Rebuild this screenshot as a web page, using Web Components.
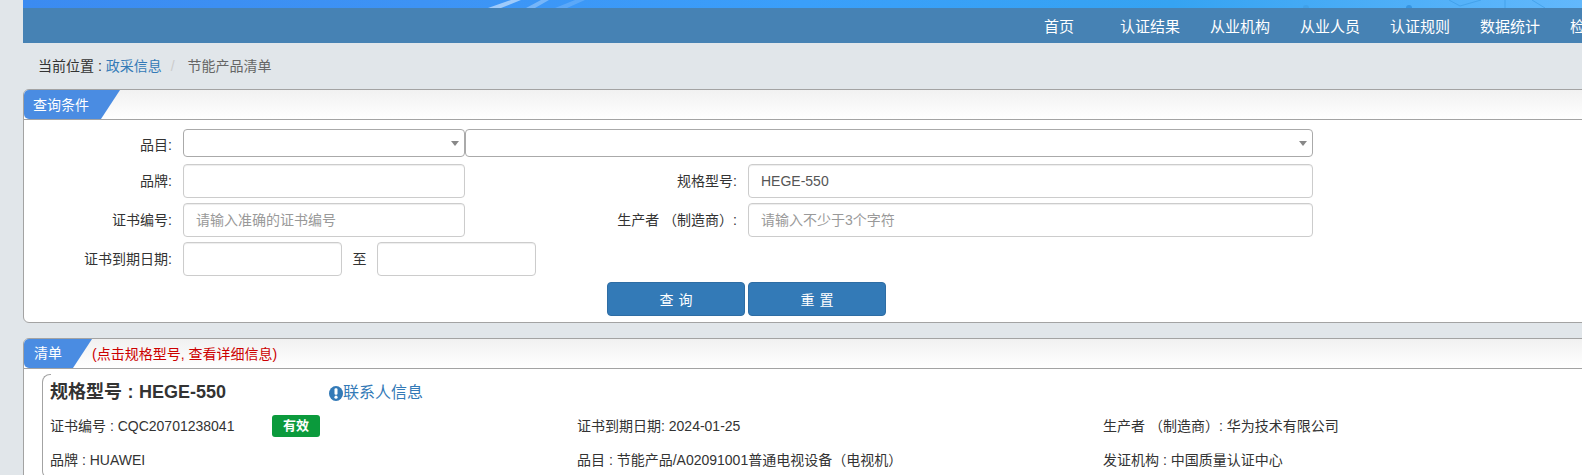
<!DOCTYPE html>
<html lang="zh-CN">
<head>
<meta charset="utf-8">
<title>节能产品清单</title>
<style>
    html, body { margin: 0; height: 475px; overflow: hidden; background: #e1e6ea; }
    body { font: 14px/20px "Liberation Sans", "Noto Sans CJK SC", sans-serif; color: #333; }
    .page { width: 1700px; margin-left: 23px; }
</style>
</head>
<body>
<div class="page">
    <site-header></site-header>
    <bread-crumb></bread-crumb>
    <query-panel></query-panel>
    <result-panel></result-panel>
</div>

<script>
class SiteHeader extends HTMLElement {
    constructor() {
        super();
        const shadowRoot = this.attachShadow({ mode: 'open' });
        const items = ['认证结果', '从业机构', '从业人员', '认证规则', '数据统计', '检'];
        shadowRoot.innerHTML = `
            <style>
                :host{ display:block; }
                .band{
                    height:8px;
                    background:linear-gradient(90deg, #3b8bf1 0, #3d93f5 400px, #3a9ffa 780px, #35a3f2 1150px, #62b8fc 1559px);
                }
                .band svg{ display:block; }
                nav{
                    height:35px;
                    background:#4682b4;
                    display:flex;
                    padding-left:1006px;
                    line-height:37px;
                    font-size:15px;
                    color:#fff;
                }
                a{ padding:0 15px; white-space:nowrap; }
                a.home{ margin-right:16px; }
            </style>
            <div class="band">
                <svg width="1700" height="8" viewBox="0 0 1700 8">
                    <polygon points="465,8 478,8 498,0 488,0" fill="#fff" opacity=".5"/>
                    <polygon points="503,8 512,8 526,0 518,0" fill="#fff" opacity=".3"/>
                    <polygon points="532,8 544,8 562,0 552,0" fill="#fff" opacity=".16"/>
                    <g fill="none" stroke="#3d9ce6" stroke-width="1" opacity=".7">
                        <path d="M1426 0L1437 6L1458 0"/>
                        <path d="M1482 0V8"/>
                        <path d="M1509 0L1522 8"/>
                    </g>
                    <circle cx="1283" cy="8" r="3" fill="#3d9ce6" opacity=".7"/>
                    <circle cx="1386" cy="8" r="3" fill="#2f8fdc" opacity=".8"/>
                </svg>
            </div>
            <nav>
                <a class="home">首页</a>
                ${items.map(t => `<a>${t}</a>`).join('')}
            </nav>
        `;
    }
}

class BreadCrumb extends HTMLElement {
    constructor() {
        super();
        const shadowRoot = this.attachShadow({ mode: 'open' });
        shadowRoot.innerHTML = `
            <style>
                :host{ display:block; height:46px; padding-left:15px; line-height:46px; font-size:14px; color:#333; }
                a{ color:#337ab7; }
                i{ font-style:normal; color:#ccc; padding:0 9px 0 9px; }
                span{ color:#666; }
            </style>
            当前位置 : <a>政采信息</a><i>/</i><span>&nbsp;节能产品清单</span>
        `;
    }
}

class PanelBox extends HTMLElement {
    constructor() {
        super();
        const shadowRoot = this.attachShadow({ mode: 'open' });
        shadowRoot.innerHTML = `
            <style>
                :host{ display:block; background:#fff; border:1px solid #a3a3a3; border-radius:6px 0 0 6px; }
                header{
                    height:29px;
                    display:flex;
                    align-items:center;
                    background:linear-gradient(#f1f1f1, #fff);
                    border-bottom:1px solid #a3a3a3;
                    border-radius:5px 0 0 0;
                }
                .tab{
                    width:var(--tab-w);
                    height:29px;
                    box-sizing:border-box;
                    padding-left:var(--tab-pad);
                    line-height:var(--tab-lh);
                    color:#fff;
                    background:#4a8ce2;
                    border-radius:5px 0 0 5px;
                    clip-path:polygon(0 0, 100% 0, calc(100% - 19px) 100%, 0 100%);
                }
            </style>
            <header>
                <div class="tab"></div>
                <slot name="hint"></slot>
            </header>
            <slot></slot>
        `;
    }

    connectedCallback() {
        this.shadowRoot.querySelector('.tab').textContent = this.getAttribute('heading');
    }
}

class FormRow extends HTMLElement {
    constructor() {
        super();
        const shadowRoot = this.attachShadow({ mode: 'open' });
        shadowRoot.innerHTML = `
            <style>
                :host{ display:flex; align-items:center; height:var(--row-h, 34px); }
                label{
                    width:var(--label-w, 148px);
                    padding:var(--label-top, 0) 11px 0 0;
                    box-sizing:border-box;
                    text-align:right;
                    color:#333;
                    white-space:nowrap;
                    flex:none;
                }
            </style>
            <label></label>
            <slot></slot>
        `;
    }

    connectedCallback() {
        this.shadowRoot.querySelector('label').textContent = this.getAttribute('label');
    }
}

class TextField extends HTMLElement {
    constructor() {
        super();
        const shadowRoot = this.attachShadow({ mode: 'open' });
        shadowRoot.innerHTML = `
            <style>
                :host{ display:block; flex:none; }
                input{
                    display:block;
                    width:100%;
                    height:34px;
                    box-sizing:border-box;
                    padding:0 12px;
                    border:1px solid #ccc;
                    border-radius:4px;
                    background:#fff;
                    font:14px "Liberation Sans", "Noto Sans CJK SC", sans-serif;
                    color:#555;
                    box-shadow:inset 0 1px 1px rgba(0,0,0,.075);
                    outline:none;
                }
                input::placeholder{ color:#999; opacity:1; }
            </style>
            <input>
        `;
    }

    connectedCallback() {
        const input = this.shadowRoot.querySelector('input');
        input.value = this.getAttribute('value') || '';
        input.placeholder = this.getAttribute('placeholder') || '';
    }
}

class ComboBox extends HTMLElement {
    constructor() {
        super();
        const shadowRoot = this.attachShadow({ mode: 'open' });
        shadowRoot.innerHTML = `
            <style>
                :host{ display:block; flex:none; }
                div{
                    height:28px;
                    box-sizing:border-box;
                    border:1px solid #aaa;
                    border-radius:4px;
                    background:#fff;
                    position:relative;
                }
                b{
                    position:absolute;
                    right:5px;
                    top:11px;
                    border:4px solid transparent;
                    border-top:5px solid #888;
                    border-bottom:0;
                }
            </style>
            <div><b></b></div>
        `;
    }
}

class QueryPanel extends HTMLElement {
    constructor() {
        super();
        const shadowRoot = this.attachShadow({ mode: 'open' });
        shadowRoot.innerHTML = `
            <style>
                :host{ display:block; }
                panel-box{ height:234px; box-sizing:border-box; --tab-w:96px; --tab-pad:9px; --tab-lh:31px; }
                .body{ padding:9px 0 0 11px; width:1290px; }
                .rows{ display:flex; flex-direction:column; gap:5px; }
                form-row.sel{ --row-h:28px; --label-top:4px; margin-bottom:2px; }
                .pair{ display:flex; align-items:center; }
                .side{ --label-w:283px; }
                .to{ width:35px; text-align:center; flex:none; color:#333; }
                .actions{ display:flex; justify-content:center; gap:3px; margin:6px 0 0 133px; }
                .actions button{
                    width:138px;
                    height:34px;
                    border:1px solid #2e6da4;
                    border-radius:4px;
                    background:#337ab7;
                    color:#fff;
                    font:14px "Liberation Sans", "Noto Sans CJK SC", sans-serif;
                    padding:0;
                    word-spacing:1px;
                }
            </style>
            <panel-box heading="查询条件">
                <div class="body">
                    <div class="rows">
                        <form-row class="sel" label="品目:">
                            <combo-box style="width:282px"></combo-box>
                            <combo-box style="width:848px"></combo-box>
                        </form-row>
                        <div class="pair">
                            <form-row label="品牌:"><text-field style="width:282px"></text-field></form-row>
                            <form-row class="side" label="规格型号:"><text-field style="width:565px" value="HEGE-550"></text-field></form-row>
                        </div>
                        <div class="pair">
                            <form-row label="证书编号:"><text-field style="width:282px" placeholder="请输入准确的证书编号"></text-field></form-row>
                            <form-row class="side" label="生产者 （制造商）:"><text-field style="width:565px" placeholder="请输入不少于3个字符"></text-field></form-row>
                        </div>
                        <form-row label="证书到期日期:">
                            <text-field style="width:159px"></text-field>
                            <span class="to">至</span>
                            <text-field style="width:159px"></text-field>
                        </form-row>
                    </div>
                    <div class="actions">
                        <button>查 询</button>
                        <button>重 置</button>
                    </div>
                </div>
            </panel-box>
        `;
    }
}

class StatusTag extends HTMLElement {
    constructor() {
        super();
        const shadowRoot = this.attachShadow({ mode: 'open' });
        shadowRoot.innerHTML = `
            <style>
                :host{
                    display:inline-block;
                    width:48px;
                    height:22px;
                    line-height:22px;
                    text-align:center;
                    font-weight:bold;
                    font-size:13px;
                    color:#fff;
                    background:#0b9a3c;
                    border-radius:3px;
                }
            </style>
            <slot></slot>
        `;
    }
}

class ResultPanel extends HTMLElement {
    constructor() {
        super();
        const shadowRoot = this.attachShadow({ mode: 'open' });
        shadowRoot.innerHTML = `
            <style>
                :host{ display:block; margin-top:15px; }
                panel-box{ height:200px; border-radius:6px 0 0 0; --tab-w:68px; --tab-pad:10px; --tab-lh:29px; }
                .hint{ color:#c00; font-size:14px; }
                .card{
                    position:relative;
                    height:105px;
                    margin:5px 0 0 18px;
                    padding:6px 0 0 8px;
                    box-sizing:border-box;
                }
                .card::before{
                    content:"";
                    position:absolute;
                    left:0;
                    top:0;
                    bottom:0;
                    width:8px;
                    border:1px solid #a3a3a3;
                    border-right:0;
                    border-radius:8px 0 0 8px;
                }
                .title{ display:flex; align-items:center; height:24px; }
                h3{ margin:0; font-size:18px; font-weight:bold; line-height:24px; color:#333; width:279px; white-space:nowrap; word-spacing:.5px; }
                .contact{ display:flex; align-items:center; font-size:16px; color:#337ab7; margin-top:2px; }
                .contact svg{ width:14px; height:15px; flex:none; }
                .grid{ display:grid; grid-template-columns:527px 526px 1fr; width:1500px; margin-top:11px; row-gap:12px; align-items:center; }
                .grid > div{ height:22px; line-height:22px; white-space:nowrap; }
                .no{ display:inline-block; width:222px; }
                status-tag{ vertical-align:top; }
            </style>
            <panel-box heading="清单">
                <span slot="hint" class="hint">(点击规格型号, 查看详细信息)</span>
                <div class="card">
                    <div class="title">
                        <h3>规格型号 : HEGE-550</h3>
                        <span class="contact">
                            <svg viewBox="0 0 14 15"><ellipse cx="7" cy="7.5" rx="7" ry="7.5" fill="#337ab7"/><rect x="5.5" y="2.2" width="3" height="6.6" rx="1.2" fill="#fff"/><circle cx="7" cy="11.2" r="1.6" fill="#fff"/></svg>联系人信息
                        </span>
                    </div>
                    <div class="grid">
                        <div><span class="no">证书编号 : CQC20701238041</span><status-tag>有效</status-tag></div>
                        <div>证书到期日期: 2024-01-25</div>
                        <div>生产者 （制造商）: 华为技术有限公司</div>
                        <div>品牌 : HUAWEI</div>
                        <div>品目 : 节能产品/A02091001普通电视设备（电视机）</div>
                        <div>发证机构 : 中国质量认证中心</div>
                    </div>
                </div>
            </panel-box>
        `;
    }
}

customElements.define('site-header', SiteHeader);
customElements.define('bread-crumb', BreadCrumb);
customElements.define('panel-box', PanelBox);
customElements.define('form-row', FormRow);
customElements.define('text-field', TextField);
customElements.define('combo-box', ComboBox);
customElements.define('query-panel', QueryPanel);
customElements.define('status-tag', StatusTag);
customElements.define('result-panel', ResultPanel);
</script>
</body>
</html>
